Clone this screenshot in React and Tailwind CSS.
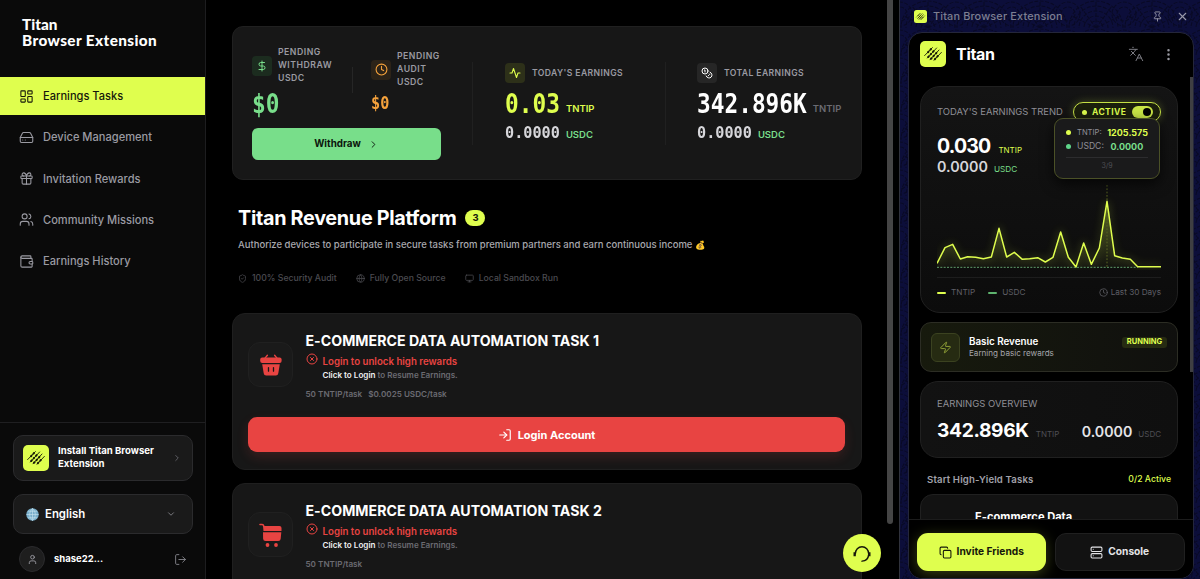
import {
  LayoutDashboard, HardDrive, Gift, Users, Wallet, ChevronRight, ChevronDown, User, LogOut, LogIn,
  DollarSign, Clock, Coins, ShieldCheck, Globe, Monitor, CircleX, Pin, X, Languages,
  EllipsisVertical, Zap, Copy, Server,
} from 'lucide-react';

const navItems = [
  { label: 'Earnings Tasks', icon: LayoutDashboard, active: true },
  { label: 'Device Management', icon: HardDrive },
  { label: 'Invitation Rewards', icon: Gift },
  { label: 'Community Missions', icon: Users },
  { label: 'Earnings History', icon: Wallet },
];

const trendPoints =
  '126,250 150,203 173,193 196,237 218,230 242,232 265,236 289,231 312,145 335,231 358,217 382,238 404,236 428,233 451,246 474,232 497,156 520,232 543,261 566,189 589,253 613,204 636,64 659,227 682,234 706,238 728,260 798,260';

function TitanLogo({ className }) {
  return (
    <svg viewBox="0 0 26 26" className={className}>
      <rect width="26" height="26" rx="5" fill="#dffe4e" />
      <g stroke="#171a08" strokeLinecap="round" fill="none">
        <path strokeWidth="0.9" d="M4.6 14.6 12.4 6.6M7.4 17 16.6 7M10 18.8 19 9M14 19.2 21.4 11.4" />
        <path strokeWidth="2" strokeDasharray="0.8 2.8" d="M8 11.2 11.4 7.6M8.2 16 15.4 8.2M11 17.8 18 10.2M14.8 18.2 18.6 14.2" />
      </g>
    </svg>
  );
}

function BasketIcon() {
  return (
    <svg viewBox="0 0 24 24" className="size-6">
      <path d="M8.4 2.2 5.6 5.6M15.6 2.2l2.8 3.4" stroke="#e84442" strokeWidth="1.4" strokeLinecap="round" />
      <rect x="1.2" y="4.6" width="21.4" height="5.4" rx="2" fill="#e84442" />
      <path d="M3.2 11.2h17.6l-1.5 9a2.5 2.5 0 0 1-2.5 2.2H7.2a2.5 2.5 0 0 1-2.5-2.2z" fill="#e84442" />
      <path d="M9.5 14.6v3.6M14.5 14.6v3.6" stroke="#171717" strokeWidth="1.3" strokeLinecap="round" />
    </svg>
  );
}

function CartIcon() {
  return (
    <svg viewBox="0 0 24 24" className="size-6">
      <path d="M1 1.5h2.2c.9 0 1.3.6 1.5 1.5" stroke="#e84442" strokeWidth="1.6" fill="none" strokeLinecap="round" />
      <path d="M4 3h16.5a2 2 0 0 1 2 2v3H4.5z" fill="#e84442" />
      <path d="M4 9.2h18.3l-.6 6.6a2.4 2.4 0 0 1-2.4 2.2H6.5a2.4 2.4 0 0 1-2.4-2.2z" fill="#e84442" />
      <circle cx="8.5" cy="22" r="1.9" fill="#e84442" />
      <circle cx="17" cy="22" r="1.9" fill="#e84442" />
    </svg>
  );
}

function PulseIcon() {
  return (
    <svg viewBox="0 0 24 24" className="size-3" fill="none" stroke="currentColor" strokeWidth="2.2" strokeLinecap="round" strokeLinejoin="round">
      <polyline points="22 12 18 12 15 21 9 3 6 12 2 12" />
    </svg>
  );
}

function Sidebar() {
  return (
    <aside className="w-[206px] shrink-0 flex flex-col bg-[#0a0a0a] border-r border-[#1d1d1f]">
      <div className="relative h-[77px] shrink-0 pt-[16px] pl-[22px] font-['Lato'] font-black text-[15.3px] leading-[16px] text-white">
        <div>Titan</div>
        <div className="tracking-[0.4px] whitespace-nowrap">Browser Extension</div>
      </div>
      <nav className="flex flex-col gap-[3.3px]">
        {navItems.map(({ label, icon: Icon, active }) => (
          <div
            key={label}
            className={`h-[38px] flex items-center gap-[9px] pl-[19px] text-[11.1px] font-medium ${
              active ? 'bg-[#dffe4e] text-[#16180a]' : 'text-[#9a9aa2]'
            }`}
          >
            <Icon className="size-[15px]" strokeWidth={1.7} />
            <span className="pt-px">{label}</span>
          </div>
        ))}
      </nav>
      <div className="mt-auto h-[157px] border-t border-[#1f1f21] pt-3 pl-[13px] pr-[12px]">
        <div className="h-[46px] flex items-center rounded-[10px] border border-[#2b2b2d] bg-[#1a1a1a] pl-[9px] pr-[10px]">
          <TitanLogo className="size-[26px]" />
          <div className="ml-[9px] flex-1 text-[9.6px] font-bold leading-[12.6px] text-white whitespace-nowrap">
            Install Titan Browser
            <br />
            Extension
          </div>
          <ChevronRight className="size-[10px] text-[#6b6b72]" />
        </div>
        <div className="mt-[13px] h-[40px] flex items-center rounded-[10px] border border-[#2b2b2d] bg-[#1a1a1a] pl-[12px] pr-4">
          <svg viewBox="0 0 14 14" className="size-[13px]">
            <circle cx="7" cy="7" r="6.7" fill="#78aecb" />
            <path d="M7 .5v13M.5 7h13M2 3.5h10M2 10.5h10M7 .5c-4 4-4 9 0 13M7 .5c4 4 4 9 0 13" stroke="#c4e2ee" strokeWidth=".7" fill="none" />
          </svg>
          <span className="ml-[6px] pt-px flex-1 text-[11.4px] font-semibold text-white">English</span>
          <ChevronDown className="size-[10px] text-[#8a8a90]" />
        </div>
        <div className="mt-3 h-[26px] flex items-center pl-[6px] pr-[6px]">
          <div className="size-[26px] rounded-full border border-[#2b2b2d] bg-[#1e1e1e] flex items-center justify-center">
            <User className="size-[11px] text-[#9a9aa2]" />
          </div>
          <span className="ml-[9px] flex-1 text-[9.5px] font-bold text-white">shase22...</span>
          <LogOut className="size-[13px] text-[#85858c]" strokeWidth={1.7} />
        </div>
      </div>
    </aside>
  );
}

function PendingBlock({ icon, label, value, boxClass, valueClass }) {
  return (
    <div className="flex flex-col">
      <div className="flex items-center gap-[6px]">
        <div className={`size-5 shrink-0 rounded flex items-center justify-center ${boxClass}`}>{icon}</div>
        <div className="w-[56px] text-[8.7px] font-semibold leading-[13px] tracking-[0.5px] text-[#9a9aa2]">{label}</div>
      </div>
      <div className={`font-['DejaVu_Sans_Mono'] font-bold scale-y-115 ${valueClass}`}>{value}</div>
    </div>
  );
}

function EarningsBlock({ icon, label, value, boxClass, valueClass, unitClass }) {
  return (
    <div>
      <div className="flex items-center gap-[7px]">
        <div className={`size-5 rounded flex items-center justify-center ${boxClass}`}>{icon}</div>
        <div className="text-[8.6px] font-semibold tracking-[0.4px] text-[#9a9aa2] whitespace-nowrap">{label}</div>
      </div>
      <div className="mt-[7px] h-[29px] flex items-baseline gap-[6px] leading-[29px] whitespace-nowrap">
        <span className={`font-['DejaVu_Sans_Mono'] font-bold text-[22.8px] scale-y-115 ${valueClass}`}>{value}</span>
        <span className={`text-[9.5px] font-semibold ${unitClass}`}>TNTIP</span>
      </div>
      <div className="h-7 flex items-baseline gap-[6px] leading-7 whitespace-nowrap">
        <span className="font-['DejaVu_Sans_Mono'] font-bold text-[15.2px] scale-y-110 text-[#d6d6da]">0.0000</span>
        <span className="text-[9.5px] font-semibold text-[#79de8b]">USDC</span>
      </div>
    </div>
  );
}

function StatsCard() {
  return (
    <section className="h-[154px] shrink-0 flex rounded-[11px] border border-[#202020] bg-[#171717] pl-[19px]">
      <div className="w-[189px] shrink-0 pt-[19px]">
        <div className="flex h-[82px]">
          <div className="w-[100px] shrink-0">
            <PendingBlock
              icon={<DollarSign className="size-[12px]" />}
              label="PENDING WITHDRAW USDC"
              value="$0"
              boxClass="bg-[#1c2c1f] text-[#79de8b]"
              valueClass="mt-[4px] text-[22.8px] leading-[30px] text-[#79de8b]"
            />
          </div>
          <div className="w-px h-[26px] mt-[21px] shrink-0 bg-[#262626]" />
          <div className="ml-[18px] pt-[4px]">
            <PendingBlock
              icon={<Clock className="size-[13px]" />}
              label="PENDING AUDIT USDC"
              value="$0"
              boxClass="bg-[#2c2318] text-[#f5a23c]"
              valueClass="text-[15.2px] leading-[29px] text-[#f5a23c]"
            />
          </div>
        </div>
        <button className="h-[32px] w-[189px] flex items-center justify-center gap-[7px] rounded-md bg-[#78de8a] text-[9.8px] font-bold text-[#0b150c]">
          Withdraw
          <ChevronRight className="size-[11px]" />
        </button>
      </div>
      <div className="ml-[31px] mt-[35px] h-[83px] w-px bg-[#202020]" />
      <div className="ml-8 w-[160px] pt-[36px]">
        <EarningsBlock
          icon={<PulseIcon />}
          label="TODAY'S EARNINGS"
          value="0.03"
          boxClass="bg-[#2d3019] text-[#dffe4e]"
          valueClass="text-[#dffe4e]"
          unitClass="text-[#dffe4e]"
        />
      </div>
      <div className="mt-[35px] h-[83px] w-px bg-[#202020]" />
      <div className="ml-[31px] pt-[36px]">
        <EarningsBlock
          icon={<Coins className="size-[12px]" />}
          label="TOTAL EARNINGS"
          value="342.896K"
          boxClass="bg-[#262626] text-white"
          valueClass="text-white"
          unitClass="text-[#6b6b72]"
        />
      </div>
    </section>
  );
}

function TaskCard({ title, icon, rewards }) {
  return (
    <section className="h-[157px] shrink-0 rounded-[13px] border border-[#1f1f1f] bg-[#171717] pl-[15px] pr-4">
      <div className="flex pt-[18px]">
        <div className="mt-[10px] size-[45px] rounded-[12px] border border-[#202020] bg-[#1a1a1a] flex items-center justify-center">
          {icon}
        </div>
        <div className="ml-[12.5px]">
          <h3 className="text-[14.15px] font-bold leading-[18px] tracking-[0.02px] text-white whitespace-nowrap">{title}</h3>
          <div className="mt-[3px] flex gap-[5px]">
            <CircleX className="size-[12px] text-[#e84442]" />
            <div>
              <div className="mt-px text-[9.7px] font-semibold leading-[15px] text-[#e84442]">Login to unlock high rewards</div>
              <div className="text-[8.1px] font-semibold leading-[13px] text-[#6b6b72]">
                <span className="text-[#f0f0f2]">Click to Login</span> to Resume Earnings.
              </div>
            </div>
          </div>
          <div className="mt-[6px] flex gap-[6px] text-[8.15px] font-semibold leading-[13px] text-[#6b6b72]">
            {rewards.map((r) => (
              <span key={r}>{r}</span>
            ))}
          </div>
        </div>
      </div>
      <button className="mt-[16px] h-[35px] w-full flex items-center justify-center gap-[6px] rounded-[9px] bg-[#e84442] pt-px text-[11px] font-bold text-white shadow-[0_5px_12px_rgba(232,68,66,0.16)]">
        <LogIn className="size-[14px]" />
        Login Account
      </button>
    </section>
  );
}

function MainContent() {
  return (
    <main className="relative flex-1 min-w-0 h-full overflow-hidden bg-black flex flex-col pl-[26px] pr-[37px] pt-[26px]">
      <StatsCard />
      <div className="h-[133px] shrink-0 pl-[6px] pt-[25px]">
        <div className="flex items-center gap-[9px]">
          <h2 className="text-[19.8px] font-bold leading-[26px] tracking-[-0.3px] text-white">Titan Revenue Platform</h2>
          <span className="h-4 w-5 rounded-full bg-[#dffe4e] text-[9.5px] font-bold text-[#16180a] flex items-center justify-center">3</span>
        </div>
        <p className="mt-[7px] text-[9.5px] font-medium leading-[14px] text-[#a8a8ae] whitespace-nowrap">
          Authorize devices to participate in secure tasks from premium partners and earn continuous income{' '}
          <span className="text-[8.5px]">💰</span>
        </p>
        <div className="mt-[19px] flex gap-[19px] text-[8.7px] font-medium leading-[14px] text-[#4b4b50]">
          <span className="flex items-center gap-[5px]"><ShieldCheck className="size-[9px]" />100% Security Audit</span>
          <span className="flex items-center gap-[5px]"><Globe className="size-[9px]" />Fully Open Source</span>
          <span className="flex items-center gap-[5px]"><Monitor className="size-[9px]" />Local Sandbox Run</span>
        </div>
      </div>
      <div className="flex flex-col gap-[13px]">
        <TaskCard title="E-COMMERCE DATA AUTOMATION TASK 1" icon={<BasketIcon />} rewards={['50 TNTIP/task', '$0.0025 USDC/task']} />
        <TaskCard title="E-COMMERCE DATA AUTOMATION TASK 2" icon={<CartIcon />} rewards={['50 TNTIP/task']} />
      </div>
      {/* scrollbar thumb */}
      <div className="absolute right-[6px] top-0 h-[524px] w-[6px] rounded-b-full bg-[#454545]" />
      {/* support button */}
      <div className="absolute right-[18px] bottom-[7px] size-[38px] rounded-full bg-[#dffe4e] flex items-center justify-center">
        <svg viewBox="0 0 24 24" className="size-5" fill="none" stroke="#16180a" strokeWidth="1.7">
          <path d="M4 13a8 8.5 0 0 1 16 0M20 14c-.5 5-3.5 7.6-8 7.8" strokeLinecap="round" />
          <path d="M3.2 11v5M20.8 11v5" strokeWidth="2.8" />
        </svg>
      </div>
    </main>
  );
}

function TrendCard() {
  return (
    <section className="relative h-[227px] shrink-0 rounded-[20px] border border-[#202020] bg-linear-to-b from-[#141414] to-[#0c0c0c] px-4">
      <div className="mt-[15px] flex h-5 items-center justify-between">
        <span className="text-[9.45px] text-[#8f8f96] whitespace-nowrap">TODAY'S EARNINGS TREND</span>
        <span className="h-5 w-[88px] shrink-0 rounded-full border border-[#c5e045] bg-[#1b1f0c] shadow-[0_0_8px_rgba(223,254,78,0.25)] flex items-center pl-[8px]">
          <span className="size-[5px] rounded-full bg-[#dffe4e]" />
          <span className="ml-[5px] text-[8.5px] font-bold tracking-[0.4px] text-[#dffe4e]">ACTIVE</span>
          <span className="ml-[6px] h-[12px] w-[21px] rounded-full bg-[#c9e546] flex items-center justify-end pr-[2px]">
            <span className="size-[8px] rounded-full bg-black" />
          </span>
        </span>
      </div>
      <div className="mt-[12px] h-[24px] flex items-baseline gap-[8px] leading-[24px]">
        <span className="text-[19.5px] font-bold tracking-[-0.8px] text-white">0.030</span>
        <span className="text-[8px] text-[#dffe4e]">TNTIP</span>
      </div>
      <div className="h-[18px] flex items-baseline gap-[6px] leading-[18px]">
        <span className="text-[14.3px] font-semibold text-[#d6d6da]">0.0000</span>
        <span className="text-[8.2px] text-[#79de8b]">USDC</span>
      </div>
      <svg viewBox="126 15 672 255" className="mt-[9px] h-[85px] w-[224px]">
        <defs>
          <linearGradient id="trendFill" x1="0" y1="0" x2="0" y2="1">
            <stop offset="0" stopColor="#dffe4e" stopOpacity="0.3" />
            <stop offset="1" stopColor="#dffe4e" stopOpacity="0.03" />
          </linearGradient>
          <filter id="trendGlow" x="-10%" y="-20%" width="120%" height="140%">
            <feGaussianBlur stdDeviation="12" />
          </filter>
        </defs>
        <polygon points={`${trendPoints} 798,262 126,262`} fill="url(#trendFill)" />
        <polyline points={trendPoints} fill="none" stroke="#dffe4e" strokeWidth="8" opacity="0.22" filter="url(#trendGlow)" />
        <path d="M126 262H728" stroke="#5f9d69" strokeWidth="3" strokeDasharray="6 4" />
        <path d="M636 15V262" stroke="#596520" strokeWidth="3" strokeDasharray="5 5" />
        <polyline points={trendPoints} fill="none" stroke="#dffe4e" strokeWidth="4.5" strokeLinejoin="round" />
      </svg>
      <div className="mt-[7px] border-t border-[#1d1d1d] flex items-center h-[30px] text-[8.2px] text-[#5f5f66]">
        <span className="h-[2px] w-[9px] rounded-full bg-[#dffe4e]" />
        <span className="ml-[5px]">TNTIP</span>
        <span className="ml-[13px] h-[2px] w-[9px] rounded-full bg-[#5eb36e]" />
        <span className="ml-[5px]">USDC</span>
        <Clock className="ml-auto size-[9px]" />
        <span className="ml-[3px]">Last 30 Days</span>
      </div>
      {/* chart tooltip */}
      <div className="absolute left-[133px] top-[31px] h-[61px] w-[106px] rounded-[9px] border border-[#4b5127] bg-[#1a1a1b] px-[11px] pt-[7px] shadow-[0_5px_14px_rgba(0,0,0,0.7)]">
        <div className="flex items-center h-[13.5px]">
          <span className="size-[5px] rounded-full bg-[#dffe4e]" />
          <span className="ml-[6px] text-[7.6px] text-[#8f8f96]">TNTIP:</span>
          <span className="ml-auto text-[9px] font-bold text-[#dffe4e]">1205.575</span>
        </div>
        <div className="flex items-center h-[13.5px]">
          <span className="size-[5px] rounded-full bg-[#5fd58a]" />
          <span className="ml-[6px] text-[8.6px] text-[#8f8f96]">USDC:</span>
          <span className="ml-[6.5px] text-[9px] font-bold text-[#79de8b]">0.0000</span>
        </div>
        <div className="mt-[4px] border-t border-[#2c2c2e] pt-[3px] text-center text-[7px] leading-[10px] text-[#4e4e54]">3/9</div>
      </div>
    </section>
  );
}

function ExtensionPanel() {
  return (
    <div className="relative w-[301px] shrink-0 h-full overflow-hidden bg-[#0c0e3a] border-l border-[#30323c]">
      <svg className="absolute inset-0 size-full" aria-hidden="true">
        <defs>
          <pattern id="waves" width="56" height="28" patternUnits="userSpaceOnUse">
            <g fill="none" stroke="#080926" strokeWidth="1.2" strokeDasharray="4 1.5">
              <circle cx="28" cy="28" r="27" />
              <circle cx="28" cy="28" r="22" />
              <circle cx="28" cy="28" r="17" />
              <circle cx="28" cy="28" r="12" />
              <circle cx="28" cy="28" r="7" />
              <circle cx="0" cy="14" r="12" />
              <circle cx="56" cy="14" r="12" />
              <circle cx="0" cy="14" r="7" />
              <circle cx="56" cy="14" r="7" />
              <path d="M28 28V2M28 28 12 6M28 28 44 6M28 28 4 16M28 28 52 16" />
            </g>
          </pattern>
        </defs>
        <rect width="100%" height="100%" fill="url(#waves)" />
      </svg>
      <div className="relative h-full flex flex-col pl-[8px] pr-[6px]">
        <div className="h-8 shrink-0 flex items-center pl-[6px] pr-[5px] text-[#9a9aab]">
          <TitanLogo className="size-[13px]" />
          <span className="ml-[6px] flex-1 text-[10.9px] font-medium tracking-[0.15px] text-[#7d7f92]">Titan Browser Extension</span>
          <Pin className="size-[11px]" />
          <X className="ml-[13px] size-[13px]" />
        </div>
        <div className="relative flex-1 min-h-0 overflow-hidden rounded-[14px] border border-[#24263a] bg-black flex flex-col">
          <header className="h-[53px] shrink-0 flex items-center pl-[11px] pr-[17px] pb-[11px]">
            <TitanLogo className="size-[26px]" />
            <span className="ml-[10px] flex-1 text-[16px] font-bold tracking-[-0.3px] text-white">Titan</span>
            <Languages className="size-[16px] text-[#7b7b82]" strokeWidth={1.5} />
            <EllipsisVertical className="ml-[17px] size-[15px] text-[#9a9aa2]" />
          </header>
          <div className="flex-1 min-h-0 overflow-hidden flex flex-col pl-[11px] pr-[15px]">
            <TrendCard />
            <section className="mt-[9px] h-[50px] shrink-0 flex items-center rounded-[11px] border border-[#2c2d24] bg-linear-to-r from-[#171a0d] to-[#10100e] pl-[10px] pr-[10px]">
              <div className="size-[29px] rounded-md border border-[#3b4220] bg-[#262b12] flex items-center justify-center">
                <Zap className="size-[13px] text-[#9aab3a]" strokeWidth={1.7} />
              </div>
              <div className="ml-[9px] flex-1 pt-px">
                <div className="text-[9.8px] font-semibold leading-[12px] text-white">Basic Revenue</div>
                <div className="text-[8.1px] leading-[11px] text-[#a5a5ab]">Earning basic rewards</div>
              </div>
              <span className="mb-[10px] h-[11px] w-[45px] rounded-[3px] bg-[#262b12] text-[7.5px] font-bold text-[#dffe4e] flex items-center justify-center">RUNNING</span>
            </section>
            <section className="mt-[9px] h-[77px] shrink-0 rounded-[18px] border border-[#202020] bg-linear-to-r from-[#121212] to-[#0f0f0f] px-4 pt-[15px]">
              <div className="text-[9.5px] leading-[14px] text-[#8f8f96]">EARNINGS OVERVIEW</div>
              <div className="h-[24px] flex items-baseline leading-[24px] mt-[6.5px]">
                <span className="text-[19.2px] font-bold tracking-[-0.35px] text-white">342.896K</span>
                <span className="ml-[7px] flex-1 text-[8px] text-[#4e4e54]">TNTIP</span>
                <span className="text-[14.2px] font-semibold text-[#e4e4e7]">0.0000</span>
                <span className="ml-[6px] text-[8px] text-[#4e4e54]">USDC</span>
              </div>
            </section>
            <div className="mt-[15px] h-[14px] shrink-0 flex items-center justify-between pl-[7px] pr-[7px]">
              <span className="text-[9.6px] font-semibold tracking-[0.15px] text-[#a1a1aa]">Start High-Yield Tasks</span>
              <span className="text-[8.7px] font-medium text-[#dffe4e]">0/2 Active</span>
            </div>
            <section className="mt-[7px] h-20 shrink-0 rounded-[13px] border border-[#202020] bg-[#121212] pt-[15px] pl-[54px] text-[11.1px] font-bold leading-[15px] text-white">
              E-commerce Data
            </section>
          </div>
          <footer className="h-[59px] shrink-0 border-t border-[#1c1c1c] bg-black flex gap-[9px] pt-[13px] pl-[8px] pr-[8px]">
            <button className="flex-1 h-[38px] flex items-center justify-center gap-[5px] rounded-[11px] bg-[#dffe4e] text-[10.2px] font-bold text-[#16180a] shadow-[0_3px_14px_rgba(223,254,78,0.25)]">
              <Copy className="size-[13px]" />
              Invite Friends
            </button>
            <button className="flex-1 h-[38px] flex items-center justify-center gap-[5px] rounded-[11px] border border-[#202020] bg-[#121212] text-[10.2px] font-bold text-[#e4e4e7]">
              <Server className="size-[13px]" />
              Console
            </button>
          </footer>
          <div className="absolute right-0 top-[44px] h-[295px] w-[3px] bg-[#3f3f42]" />
        </div>
      </div>
    </div>
  );
}

function App() {
  return (
    <div className="h-[579px] w-[1200px] flex overflow-hidden bg-black font-['Inter',sans-serif]">
      <Sidebar />
      <MainContent />
      <ExtensionPanel />
    </div>
  );
}

export default App;
